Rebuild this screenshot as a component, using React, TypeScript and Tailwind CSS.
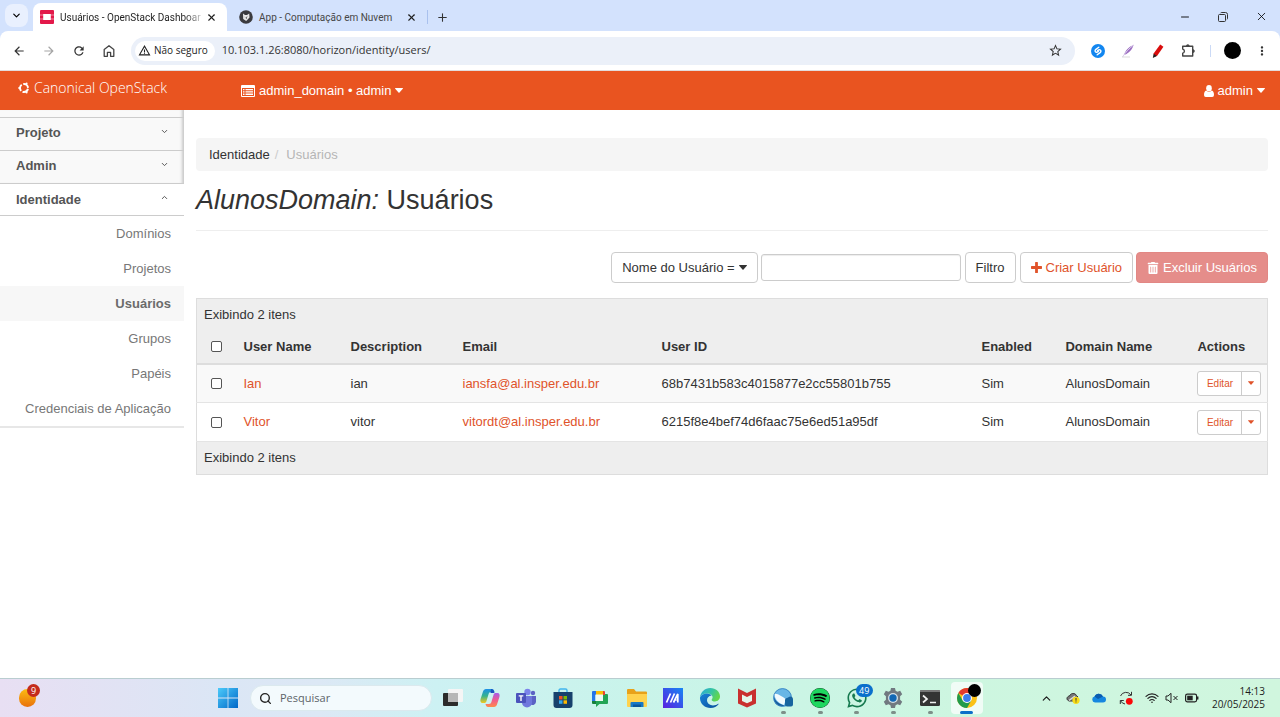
import React from "react";
import { FaSpotify, FaTrashAlt, FaWhatsapp } from "react-icons/fa";
import { MdArrowBack, MdArrowForward, MdMoreVert, MdRefresh, MdStarBorder, MdWarningAmber } from "react-icons/md";
import { ChevronDown, ChevronUp, Minus, Plus, Search, X } from "lucide-react";

const UI = "font-['Open_Sans','Noto_Sans',sans-serif]";

function Caret({ small }: { small?: boolean }) {
  return (
    <svg width={small ? 6 : 8} height={small ? 4 : 5} viewBox="0 0 8 5" fill="currentColor" aria-hidden="true">
      <path d="M.4 0h7.200q.6.200.2.700L4.300 4.700q-.3.300-.6 0L.2.700Q-.2.200.4 0Z" />
    </svg>
  );
}

function Tab({ title, active, icon }: { title: string; active?: boolean; icon: React.ReactNode }) {
  return (
    <div
      className={
        active
          ? "flex h-7 w-[194px] items-center rounded-t-lg bg-white pl-[7px] pr-2 text-[#1f1f1f]"
          : "flex h-7 w-[200px] items-center pl-3 pr-2 text-[#474747]"
      }
    >
      {icon}
      <button
        className={
          active
            ? "ml-1.5 whitespace-nowrap text-left font-[Roboto,sans-serif] text-[10px] [mask-image:linear-gradient(to_right,black_88%,rgba(0,0,0,0.25))]"
            : "ml-1.5 whitespace-nowrap text-left font-[Roboto,sans-serif] text-[10px]"
        }
      >
        {title}
      </button>
      <button aria-label="Fechar guia" className="ml-auto flex h-4 w-4 items-center justify-center text-[#1f1f1f]">
        <X size={11} strokeWidth={2.4} />
      </button>
    </div>
  );
}

function OpenStackIcon() {
  return (
    <svg width="14" height="14" viewBox="0 0 14 14" fill="#e3194a" aria-hidden="true">
      <path d="M1 0h12a1 1 0 0 1 1 1v3.800h-3.200V3.900H3.200v.9H0V1a1 1 0 0 1 1-1Z" />
      <path d="M0 5.300h3.200v3.400H0zM10.800 5.300H14v3.400h-3.200z" />
      <path d="M0 9.200h3.200v.9h7.600v-.9H14V13a1 1 0 0 1-1 1H1a1 1 0 0 1-1-1Z" />
    </svg>
  );
}

function AppIcon() {
  return (
    <svg width="14" height="14" viewBox="0 0 14 14" aria-hidden="true">
      <circle cx="7" cy="7" r="6.800" fill="#3b3b3f" />
      <path d="M4 3.500 6 5h2l2.200-1.600.3 4.200L7.200 11 4.200 9Z" fill="#e8e8e8" />
      <path d="M5 6.200 7 8l1.400-2.200L7.600 9Z" fill="#333" />
    </svg>
  );
}

function Chrome() {
  return (
    <header className={UI}>
      <div className="bg-[#d3e2fd]">
        <div className="flex h-[31px] items-end">
          <div className="flex h-full items-center pl-[5px] pr-[5px]">
            <button aria-label="Pesquisar guias" className="flex h-[23px] w-[23px] items-center justify-center rounded-lg bg-[#e9f0fe]">
              <ChevronDown size={11} strokeWidth={2.6} />
            </button>
          </div>
          <Tab active title="Usuários - OpenStack Dashboar" icon={<OpenStackIcon />} />
          <Tab title="App - Computação em Nuvem" icon={<AppIcon />} />
          <div className="flex h-7 items-center gap-2">
            <span className="h-3.5 w-px bg-[#a9c1ee]" />
            <button aria-label="Nova guia" className="text-[#333]"><Plus size={13} strokeWidth={2} /></button>
          </div>
          <div className="ml-auto flex h-[29px] items-center gap-[27px] pr-3">
            <button aria-label="Minimizar"><Minus size={12} strokeWidth={1.8} /></button>
            <button aria-label="Restaurar">
              <svg width="10" height="10" viewBox="0 0 10 10" fill="none" stroke="#333" aria-hidden="true">
                <rect x=".5" y="2.500" width="7" height="7" rx="1" />
                <path d="M2.500 1.200q.3-.7 1-.7h4a2 2 0 0 1 2 2v4q0 .7-.7 1" />
              </svg>
            </button>
            <button aria-label="Fechar"><X size={13} strokeWidth={1.5} /></button>
          </div>
        </div>
        <div className="flex h-10 items-center rounded-t-lg border-b border-[#e3dcdc] bg-white pl-3 pr-[11px] text-[#333]">
          <div className="flex items-center gap-4">
            <button aria-label="Voltar"><MdArrowBack size={14} /></button>
            <button aria-label="Avançar" className="text-[#a5a5a5]"><MdArrowForward size={14} /></button>
            <button aria-label="Recarregar"><MdRefresh size={14} /></button>
            <button aria-label="Página inicial">
              <svg width="14" height="14" viewBox="0 0 14 14" fill="none" stroke="#444" strokeWidth="1.300" aria-hidden="true">
                <path d="M2.200 5.400 7 1.700l4.800 3.700v6.900H8.600V8.400H5.400v3.900H2.200Z" strokeLinejoin="round" />
              </svg>
            </button>
          </div>
          <div className="ml-[15px] flex h-7 flex-1 items-center rounded-full bg-[#ebf0f9] pl-1 pr-3">
            <button className="flex h-5 items-center gap-[3px] rounded-full bg-white pl-[3px] pr-[7px] text-[10px] font-medium text-[#222]">
              <MdWarningAmber size={13} />
              Não seguro
            </button>
            <input
              aria-label="Endereço"
              readOnly
              value="10.103.1.26:8080/horizon/identity/users/"
              className="ml-[7px] min-w-0 flex-1 bg-transparent text-[11px] text-[#333] outline-none"
            />
            <button aria-label="Favoritar"><MdStarBorder size={15} /></button>
          </div>
          <div className="ml-4 flex items-center gap-4">
            <button aria-label="Shazam">
              <svg width="14" height="14" viewBox="0 0 14 14" aria-hidden="true">
                <circle cx="7" cy="7" r="7" fill="#1286f0" />
                <path d="M7.800 3.200 4.900 5.400c-1.200 1-1 2.300 0 2.700.8.400 1.600 0 2.400-.7M6.200 10.800l2.900-2.200c1.200-1 1-2.300 0-2.700-.8-.4-1.600 0-2.400.7" fill="none" stroke="#fff" strokeWidth="1.400" strokeLinecap="round" />
              </svg>
            </button>
            <button aria-label="Caneta">
              <svg width="14" height="14" viewBox="0 0 14 14" aria-hidden="true">
                <path d="M12.600 1C8 2.500 4.200 6.500 3 11c3-1 7.500-3.500 9.600-10Z" fill="#9a6cc0" />
                <path d="M1.500 13C4 9 8 4.500 12.600 1" stroke="#ddd0ee" fill="none" />
                <path d="M1 13h8" stroke="#ccc" strokeWidth=".7" />
              </svg>
            </button>
            <button aria-label="Marcador">
              <svg width="14" height="14" viewBox="0 0 14 14" aria-hidden="true">
                <path d="M9.200.5 12.400 2.700 6.200 11.700 2.500 13 2.800 9.300Z" fill="#d90d0d" />
                <path d="M2.700 9.800 5.900 11.900 1.800 13.900Z" fill="#222" />
              </svg>
            </button>
            <button aria-label="Extensões">
              <svg width="15" height="14" viewBox="0 0 15 14" fill="none" stroke="#444" strokeWidth="1.400" aria-hidden="true">
                <path d="M1.700 2.200h10v9.800h-10V9.300c2-.2 2.500-3.700 0-4.200Z" strokeLinejoin="round" />
                <path d="M5.300 2a1.500 1.500 0 0 1 3 0ZM12 5.600a1.500 1.500 0 0 1 0 3Z" fill="#444" strokeWidth=".5" />
              </svg>
            </button>
          </div>
          <span className="ml-3.5 h-3 w-px bg-[#cbdaf6]" />
          <button aria-label="Perfil" className="ml-[13px] h-[17px] w-[17px] rounded-full bg-black" />
          <button aria-label="Menu" className="ml-[14px]"><MdMoreVert size={14} /></button>
        </div>
      </div>
    </header>
  );
}

function TopBar() {
  return (
    <nav className="flex h-[39px] items-center bg-[#e95420] text-[13px] text-white">
      <a href="#" className="flex w-[241px] items-center gap-1 pb-1.5 pl-[18px] font-['Open_Sans',sans-serif] text-sm font-light">
        <svg width="12" height="12" viewBox="0 0 12 12" fill="none" stroke="#fff" aria-hidden="true">
          <circle cx="6" cy="6" r="4" strokeWidth="1.900" strokeDasharray="6.800 1.577" strokeDashoffset="-.8" />
          <circle cx="1.200" cy="6" r="1" fill="#fff" stroke="none" />
          <circle cx="8.600" cy="1.500" r="1" fill="#fff" stroke="none" />
          <circle cx="8.600" cy="10.500" r="1" fill="#fff" stroke="none" />
        </svg>
        Canonical OpenStack
      </a>
      <button className="flex items-center gap-1">
        <svg width="14" height="12" viewBox="0 0 14 12" aria-hidden="true">
          <path fillRule="evenodd" d="M1 0h12q1 0 1 1v10q0 1-1 1H1q-1 0-1-1V1q0-1 1-1ZM1 3v8h12V3Z" fill="#fff" />
          <path d="M2 4h1.500v1.300H2zM4.500 4H12v1.300H4.500zM2 6.300h1.500v1.300H2zM4.500 6.300H12v1.300H4.500zM2 8.600h1.500v1.300H2zM4.500 8.600H12v1.300H4.500z" fill="#fff" />
        </svg>
        <span>admin_domain • admin</span>
        <Caret />
      </button>
      <button className="ml-auto flex items-center gap-1 pr-[15px]">
        <svg width="10" height="12" viewBox="0 0 10 12" fill="#fff" aria-hidden="true">
          <ellipse cx="5" cy="3.200" rx="2.800" ry="3.200" />
          <path d="M2.300 5.600Q5 8.200 7.700 5.600 10 6.200 10 10q0 2-1.800 2H1.800Q0 12 0 10q0-3.800 2.300-4.400Z" />
        </svg>
        <span>admin</span>
        <Caret />
      </button>
    </nav>
  );
}

const items = ["Domínios", "Projetos", "Usuários", "Grupos", "Papéis", "Credenciais de Aplicação"];

function Sidebar() {
  return (
    <aside className="w-[184px] shrink-0 text-[13px]">
      <div className="bg-[#f9f9f9] pt-[7px] shadow-[inset_-4px_0_3px_-2px_#c8c8c8]">
        {["Projeto", "Admin"].map((name) => (
          <button key={name} className="flex h-[33px] w-full items-center justify-between border-t border-[#ccc] pb-0.5 pl-4 pr-[15px] font-bold text-[#555]">
            {name}
            <ChevronDown size={9} strokeWidth={2.6} className="mb-1" />
          </button>
        ))}
      </div>
      <button className="flex h-[33px] w-full items-center justify-between border-y border-[#ccc] pl-4 pr-[15px] font-bold text-[#555]">
        Identidade
        <ChevronUp size={9} strokeWidth={2.6} className="mb-1" />
      </button>
      <ul className="border-b-2 border-[#e7e7e7]">
        {items.map((name) => (
          <li key={name}>
            <a
              href="#"
              className={
                name === "Usuários"
                  ? "flex h-[35px] items-center justify-end bg-[#f7f7f7] pr-[13px] font-bold text-[#6b6b6b]"
                  : "flex h-[35px] items-center justify-end pr-[13px] text-[#777]"
              }
            >
              {name}
            </a>
          </li>
        ))}
      </ul>
    </aside>
  );
}

const users = [
  { name: "Ian", description: "ian", email: "iansfa@al.insper.edu.br", id: "68b7431b583c4015877e2cc55801b755" },
  { name: "Vitor", description: "vitor", email: "vitordt@al.insper.edu.br", id: "6215f8e4bef74d6faac75e6ed51a95df" },
];

const BOX = "block h-[11px] w-[11px] appearance-none rounded-[2px] border border-[#555] bg-white";

function UsersTable() {
  return (
    <table className="mt-[15px] w-full table-fixed border-collapse border border-[#ddd] text-left">
      <colgroup>
        <col className="w-10" />
        <col className="w-[107px]" />
        <col className="w-28" />
        <col className="w-[199px]" />
        <col />
        <col className="w-[84px]" />
        <col className="w-[132px]" />
        <col className="w-[77px]" />
      </colgroup>
      <thead className="bg-[#eee]">
        <tr className="h-8">
          <td colSpan={8} className="px-[7px]">Exibindo 2 itens</td>
        </tr>
        <tr className="h-[33px] border-b-2 border-[#ddd]">
          <th className="pl-[14px]"><input type="checkbox" aria-label="Selecionar todos" className={BOX} /></th>
          {["User Name", "Description", "Email", "User ID", "Enabled", "Domain Name", "Actions"].map((h) => (
            <th key={h} className="px-[7px] font-bold">{h}</th>
          ))}
        </tr>
      </thead>
      <tbody>
        {users.map((u) => (
          <tr key={u.id} className="h-[39px] border-b border-[#e4e4e4] odd:bg-[#f9f9f9]">
            <td className="pl-[14px]"><input type="checkbox" aria-label={`Selecionar ${u.name}`} className={BOX} /></td>
            <td className="px-[7px]"><a href="#" className="text-[#e0532a]">{u.name}</a></td>
            <td className="px-[7px]">{u.description}</td>
            <td className="px-[7px]"><a href="#" className="text-[#e0532a]">{u.email}</a></td>
            <td className="px-[7px]">{u.id}</td>
            <td className="px-[7px]">Sim</td>
            <td className="px-[7px]">AlunosDomain</td>
            <td className="pl-[7px]">
              <div className="flex h-[25px] w-16 rounded-[3px] border border-[#ccc] bg-white text-[10px] text-[#e0532a]">
                <button className="flex-1">Editar</button>
                <button aria-label="Mais ações" className="flex w-[19px] items-center justify-center border-l border-[#ccc]">
                  <Caret small />
                </button>
              </div>
            </td>
          </tr>
        ))}
      </tbody>
      <tfoot className="bg-[#eee]">
        <tr className="h-[33px]">
          <td colSpan={8} className="px-[7px]">Exibindo 2 itens</td>
        </tr>
      </tfoot>
    </table>
  );
}

function Content() {
  return (
    <main className="min-w-0 flex-1 px-3 pt-7 text-[13px] text-[#333]">
      <nav aria-label="Trilha" className="flex h-[33px] items-center rounded bg-[#f5f5f5] px-[13px]">
        <a href="#">Identidade</a>
        <span className="pl-[5px] pr-2 text-[#ccc]">/</span>
        <span className="text-[#b5b5b5]">Usuários</span>
      </nav>
      <h1 className="border-b border-[#eee] py-3 text-[27px] leading-[35px]"><em>AlunosDomain:</em> Usuários</h1>
      <div className="mt-[21px] flex items-center justify-end gap-1">
        <button aria-haspopup="menu" className="-mr-px flex h-[31px] items-center gap-1 rounded border border-[#ccc] px-2.5">
          <span>Nome do Usuário =</span>
          <Caret />
        </button>
        <input aria-label="Filtro" className="h-[27px] w-[200px] rounded-[3px] border border-[#ccc] px-2 shadow-[inset_0_1px_1px_rgba(0,0,0,0.075)]" />
        <button className="h-[31px] rounded border border-[#ccc] px-2.5">Filtro</button>
        <button className="flex h-[31px] items-center gap-1 rounded border border-[#ccc] px-2.5 text-[#e0532a]">
          <svg width="11" height="11" viewBox="0 0 11 11" fill="currentColor" aria-hidden="true">
            <path d="M4.700 0h1.600q.6 0 .6.600v3.500h3.500q.6 0 .6.600v1.600q0 .6-.6.600H6.900v3.500q0 .6-.6.600H4.700q-.6 0-.6-.6V6.900H.6Q0 6.900 0 6.300V4.700q0-.6.600-.6h3.500V.6q0-.6.600-.6Z" />
          </svg>
          Criar Usuário
        </button>
        <button className="-ml-px flex h-[31px] items-center gap-1 rounded border border-[#e28784] bg-[#e58d8a] px-2.5 text-white">
          <FaTrashAlt size={12} /> Excluir Usuários
        </button>
      </div>
      <UsersTable />
    </main>
  );
}

function Svg({ children }: { children: React.ReactNode }) {
  return <svg width="20" height="20" viewBox="0 0 20 20" aria-hidden="true">{children}</svg>;
}

const apps: { name: string; running?: boolean; active?: boolean; badge?: string; icon: React.ReactNode }[] = [
  {
    name: "Visão de tarefas",
    icon: (
      <Svg>
        <rect x="0" y="5" width="15" height="13" rx="1" fill="#2b2b2b" />
        <rect x="5" y="1" width="15" height="13" rx="1" fill="#f5f5f5" />
        <path d="M5 5h10v9H5z" fill="#b7b7b7" />
      </Svg>
    ),
  },
  {
    name: "Copilot",
    icon: (
      <Svg>
        <defs>
          <linearGradient id="cpA" x1="0" y1="0" x2="0" y2="1"><stop stopColor="#1b8fe8" /><stop offset=".5" stopColor="#35b38d" /><stop offset="1" stopColor="#f4c81d" /></linearGradient>
          <linearGradient id="cpB" x1="0" y1="0" x2="0" y2="1"><stop stopColor="#a65ae8" /><stop offset=".5" stopColor="#ef5b8f" /><stop offset="1" stopColor="#ff8b4a" /></linearGradient>
        </defs>
        <path d="M6 1h6c1.500 0 2 1 2.500 3H11c-1.500 0-2 .8-2.400 2L6.500 13c-.4 1.400-1 2-2.500 2H2.500C.6 15 0 13 .6 11L3 3.500C3.500 2 4.500 1 6 1Z" fill="url(#cpA)" />
        <path d="M14 19H8c-1.500 0-2-1-2.500-3H9c1.500 0 2-.8 2.400-2l2.100-7c.4-1.400 1-2 2.500-2h1.500c1.900 0 2.500 2 1.900 4L17 16.500c-.5 1.500-1.500 2.500-3 2.500Z" fill="url(#cpB)" />
        <path d="M11 1c2 0 2.800 1 3.500 4h-4Z" fill="#1d4fc0" />
      </Svg>
    ),
  },
  {
    name: "Teams",
    icon: (
      <Svg>
        <circle cx="17" cy="5" r="2.200" fill="#5b62c4" />
        <circle cx="11.500" cy="4" r="3.200" fill="#7b83eb" />
        <path d="M14 8h6v6a3.500 3.500 0 0 1-6 2Z" fill="#5b62c4" />
        <path d="M6 8h10v6.500a5 5 0 0 1-10 0Z" fill="#6f77dd" />
        <rect y="5" width="10" height="10" rx="1" fill="#4b53bc" />
        <path d="M2.700 7.300h4.600v1.300H5.700V13H4.300V8.600H2.700Z" fill="#fff" />
      </Svg>
    ),
  },
  {
    name: "Microsoft Store",
    icon: (
      <Svg>
        <path d="M6 5V2.500Q6 1 7.500 1h5Q14 1 14 2.500V5" fill="none" stroke="#42b5ee" strokeWidth="1.400" />
        <path d="M.5 4h19v13a3 3 0 0 1-3 3h-13a3 3 0 0 1-3-3Z" fill="#17416c" />
        <path d="M6 8h3.500v3.500H6z" fill="#f25022" /><path d="M10.500 8H14v3.500h-3.500z" fill="#7fba00" />
        <path d="M6 12.300h3.500v3.500H6z" fill="#35a8ee" /><path d="M10.500 12.300H14v3.500h-3.500z" fill="#ffb900" />
      </Svg>
    ),
  },
  {
    name: "Google Chat",
    icon: (
      <Svg>
        <path d="M2 4q0-1 1-1h3v4H2Z" fill="#2573e8" />
        <path d="M6 3h8v4H6Z" fill="#fbbc04" />
        <path d="M14 3q1 0 1 1v3h-2V3Z" fill="#e94235" />
        <path d="M2 7h3.500v6H2Z" fill="#2678e8" />
        <path d="M15 6h2q1 0 1 1v8q0 1-1 1H9.500l-3.500 3v-6h6.500V7H15Z" fill="#23a455" />
        <path d="M2 13h4v3H3q-1 0-1-1Z" fill="#16803c" />
        <path d="M5.500 6.500h7.500V13H5.500Z" fill="#eefaf4" />
      </Svg>
    ),
  },
  {
    name: "Explorador de Arquivos",
    icon: (
      <Svg>
        <path d="M0 2q0-1 1-1h6l2 2.500h10q1 0 1 1V10H0Z" fill="#e8a21a" />
        <path d="M0 6h20v12q0 1-1 1H1q-1 0-1-1Z" fill="#ffd24d" />
        <path d="M3.500 15q0-1 1-1h11q1 0 1 1v4h-13Z" fill="#1679c7" /><path d="M6 16.500h8V19H6Z" fill="#0b5698" />
      </Svg>
    ),
  },
  {
    name: "MyASUS",
    icon: (
      <Svg>
        <defs><linearGradient id="as" x1="0" y1="1" x2="1" y2="0"><stop stopColor="#5a20e0" /><stop offset="1" stopColor="#1686f4" /></linearGradient></defs>
        <path d="M0 0h20v20H0Z" fill="url(#as)" />
        <path d="M3.500 14.500 7.500 5.500M7.500 14.500 11.500 5.500M10.500 14.500 14.800 6v8.500" fill="none" stroke="#fff" strokeWidth="1.700" />
        <path d="M12 12h3" stroke="#fff" />
      </Svg>
    ),
  },
  {
    name: "Edge",
    icon: (
      <Svg>
        <defs>
          <linearGradient id="edA" x1="0" y1="0" x2="1" y2=".4"><stop stopColor="#28a9dd" /><stop offset=".6" stopColor="#36c5a0" /><stop offset="1" stopColor="#62d64d" /></linearGradient>
          <linearGradient id="edB" x1="0" y1="0" x2="1" y2="1"><stop stopColor="#1784d8" /><stop offset="1" stopColor="#0b4f9c" /></linearGradient>
        </defs>
        <path d="M0 9.500C.5 4 5 0 10.200 0 16 0 20 4 20 8.500c0 3-2.300 4.900-5 4.900-2 0-3.400-.7-3.400-1.500s1-1.200 1-2.700C12.600 7 10 5.500 7 5.500 3.500 5.500 1 7 0 9.500Z" fill="url(#edA)" />
        <path d="M0 9.500C1 6.800 4 5.500 7 5.500c2 0 4 1 4.700 2.100C8.500 8 7 10 7 12.300c0 3 3 5.200 6 5.200 2 0 4-.8 5-1.700.5-.3.800 0 .5.500C17 18.500 14 20 10.500 20 4.500 20-.3 15.500 0 9.500Z" fill="url(#edB)" />
      </Svg>
    ),
  },
  {
    name: "McAfee",
    icon: (
      <Svg>
        <path d="M1 .5 10 5l9-4.500v15L10 19.500l-9-4Z" fill="#c9302f" />
        <path d="M5 6.500 10 9l5-2.500V13l-5 2.300L5 13Z" fill="#e3f7ec" />
      </Svg>
    ),
  },
  {
    name: "Navegador",
    running: true,
    icon: (
      <Svg>
        <circle cx="9.500" cy="9.500" r="9.200" fill="#68b6e6" />
        <path d="M1 6c4-1 8 3 12 5l-2 6C5 15 2 11 1 6Z" fill="#f2fafe" />
        <path d="M1 9c2 5 5 7 11 8.500C5 20 0 15 1 9Z" fill="#185b9a" />
        <circle cx="9.500" cy="9.500" r="8.900" fill="none" stroke="#3a86c2" strokeWidth=".9" />
        <path d="M12 12q0-2 2-2l3-1.500q3 0 3 3v5q0 2-2 2h-4q-2 0-2-2Z" fill="#17649f" />
      </Svg>
    ),
  },
  {
    name: "Spotify",
    running: true,
    icon: <span className="flex rounded-full bg-black"><FaSpotify size={20} color="#1ed760" /></span>,
  },
  { name: "WhatsApp", running: true, badge: "49", icon: <FaWhatsapp size={22} color="#16794f" /> },
  {
    name: "Configurações",
    running: true,
    icon: (
      <Svg>
        <path d="M8 0h4l.6 2.700 1.900 1 2.700-.9 2 3.500-2.100 1.900v3.600l2.100 1.900-2 3.500-2.700-.9-1.900 1L12 20H8l-.6-2.700-1.900-1-2.700.9-2-3.500 2.100-1.900V8.200L.8 6.300l2-3.500 2.700.9 1.900-1Z" fill="#717980" />
        <circle cx="10" cy="10" r="5" fill="#d6e1e8" /><circle cx="10" cy="10" r="3.700" fill="#1267b4" />
      </Svg>
    ),
  },
  {
    name: "Terminal",
    running: true,
    icon: (
      <Svg>
        <rect y="2" width="20" height="16" rx="1.500" fill="#343434" /><path d="M1 2h18q1 0 1 1v1H0V3q0-1 1-1Z" fill="#777" />
        <path d="m3 7.500 4 3.500-4 3.500M10 14.500h6" fill="none" stroke="#f1f1f1" strokeWidth="1.700" />
      </Svg>
    ),
  },
  {
    name: "Chrome",
    running: true,
    active: true,
    icon: (
      <Svg>
        <circle cx="10" cy="10" r="10" fill="#fbc116" />
        <path d="M10 10 1.340 5A10 10 0 0 1 18.660 5Z" fill="#e33b2e" />
        <path d="M1.340 5A10 10 0 0 0 10 20l4.300-7.500L10 10 5.670 12.500Z" fill="#229a4b" />
        <path d="M10 5h8.660L14 8Z" fill="#e33b2e" />
        <circle cx="10" cy="10" r="5" fill="#fff" /><circle cx="10" cy="10" r="3.900" fill="#3b7ded" />
      </Svg>
    ),
  },
];

function Taskbar() {
  return (
    <footer className={`${UI} flex h-[39px] shrink-0 items-center border-t border-[#b9cdd0] bg-[linear-gradient(to_right,#e8dff3_0%,#dbe6f5_17%,#dce8f5_25%,#cdf1f3_34%,#c9f4ea_50%,#cdf6e0_75%,#d0f6de_100%)]`}>
      <div className="w-[218px] pl-[19px]">
        <button aria-label="Widgets" className="relative block h-[18px] w-[17px] rounded-full bg-linear-to-b from-[#fbbc13] to-[#e8700c]">
          <span className="absolute -top-[5px] left-2 flex h-[13px] w-[13px] items-center justify-center rounded-full bg-[#c42b1c] text-[9px] text-white">9</span>
        </button>
      </div>
      <button aria-label="Iniciar">
        <svg width="20" height="20" viewBox="0 0 20 20" aria-hidden="true">
          <defs><linearGradient id="win" gradientUnits="userSpaceOnUse" x1="0" y1="0" x2="20" y2="20"><stop stopColor="#4ccbfa" /><stop offset="1" stopColor="#0067c8" /></linearGradient></defs>
          <path d="M0 0h9.600v9.600H0zM10.400 0H20v9.600h-9.600zM0 10.400h9.600V20H0zM10.400 10.400H20V20h-9.600z" fill="url(#win)" />
        </svg>
      </button>
      <label className="ml-3 flex h-[26px] w-[182px] items-center gap-2 rounded-full border border-[#dbe9ee] bg-[#f3fafd] pl-2">
        <Search size={13} strokeWidth={2.5} className="shrink-0 text-[#222]" />
        <input aria-label="Pesquisar" placeholder="Pesquisar" className="w-32 bg-transparent text-[11px] outline-none placeholder:text-[#5c6368]" />
      </label>
      <div className="ml-[5px] flex w-[546px] justify-between">
        {apps.map((a) => (
          <button
            key={a.name}
            aria-label={a.name}
            className={
              a.active
                ? "relative flex h-8 w-8 items-center justify-center rounded bg-[#f0fcf6]"
                : "relative flex h-8 w-8 items-center justify-center"
            }
          >
            {a.icon}
            {a.badge && (
              <span className="absolute left-[15px] top-0.5 flex h-[13px] w-[17px] items-center justify-center rounded-full bg-[#0a70cc] text-[9px] text-white">{a.badge}</span>
            )}
            {a.active && <span className="absolute left-[17px] top-0.5 h-[13px] w-[13px] rounded-full bg-black" />}
            {a.running && (
              <span
                className={
                  a.active
                    ? "absolute bottom-0 h-[3px] w-[13px] rounded-full bg-[#0b6fc8]"
                    : "absolute bottom-0 h-[3px] w-[5px] rounded-full bg-[#7d8f88]"
                }
              />
            )}
          </button>
        ))}
      </div>
      <div className="ml-auto flex items-center pr-[15px] text-[#1b1b1b]">
        <button aria-label="Ícones ocultos"><ChevronUp size={13} strokeWidth={2.2} /></button>
        <svg className="ml-[13px]" width="14" height="12" viewBox="0 0 14 12" aria-hidden="true">
          <path d="M1.500 8C0 6 2 4 3.500 4 4.500 1 9 .5 10.500 3.500L12 5l-5 4H3Z" fill="#777" stroke="#333" />
          <path d="M3 8.500 9 4" stroke="#ddd" strokeWidth="1.500" />
          <circle cx="10" cy="8.300" r="3.600" fill="#f8dc16" /><path d="M10 6v2.700M10 9.500v.9" stroke="#333" />
        </svg>
        <svg className="ml-3" width="14" height="10" viewBox="0 0 14 10" aria-hidden="true">
          <path d="M3 9.500A3 3 0 0 1 2.500 3.600 4.600 4.600 0 0 1 11 3.500a3 3 0 0 1 0 6Z" fill="#1687df" />
          <path d="M2.500 3.600A4.600 4.600 0 0 1 11 3.500L6 6Z" fill="#0b5cae" />
        </svg>
        <svg className="ml-[13px]" width="14" height="14" viewBox="0 0 14 14" fill="none" stroke="#333" aria-hidden="true">
          <path d="M1.500 5A6 6 0 0 1 12 4M12.500.8V4.300H9M1.300 13V9.500h3.500M1.600 9.800A6 6 0 0 0 6 13" />
          <circle cx="10.300" cy="10.300" r="3.400" fill="#fb0707" stroke="none" />
        </svg>
        <svg className="ml-3" width="14" height="12" viewBox="0 0 14 12" fill="none" stroke="#222" strokeWidth="1.200" strokeLinecap="round" aria-hidden="true">
          <path d="M1 4.300a8.500 8.500 0 0 1 12 0M2.900 6.400a5.800 5.800 0 0 1 8.200 0M4.800 8.400a3.100 3.100 0 0 1 4.400 0" />
          <circle cx="7" cy="10.300" r=".8" fill="#222" stroke="none" />
        </svg>
        <svg className="ml-1.5" width="14" height="12" viewBox="0 0 14 12" fill="none" stroke="#222" aria-hidden="true">
          <path d="M1 4h2l3-2.700v9.400L3 8H1ZM8.500 4l4 4M12.500 4l-4 4" strokeLinejoin="round" />
        </svg>
        <svg className="ml-1.5" width="14" height="10" viewBox="0 0 14 10" aria-hidden="true">
          <rect x=".6" y="1.100" width="11" height="7.800" rx="1.800" fill="none" stroke="#222" strokeWidth="1.200" />
          <rect x="2.200" y="2.700" width="5.500" height="4.600" fill="#222" /><path d="M12.700 3.500v3" stroke="#222" strokeWidth="1.500" />
        </svg>
        <time className="ml-[13px] text-right text-[10px] leading-[13px]">
          14:13
          <br />
          20/05/2025
        </time>
      </div>
    </footer>
  );
}

export default function App() {
  return (
    <div className="flex min-h-screen flex-col bg-white font-['Liberation_Sans',Arial,sans-serif]">
      <Chrome />
      <TopBar />
      <div className="flex flex-1">
        <Sidebar />
        <Content />
      </div>
      <Taskbar />
    </div>
  );
}
